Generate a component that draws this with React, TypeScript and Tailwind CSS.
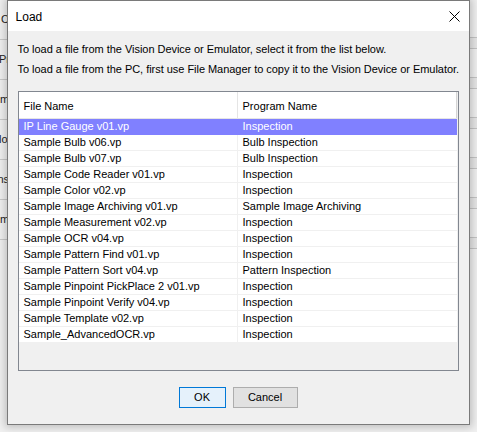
import React from "react";

const rows: [string, string][] = [
  ["IP Line Gauge v01.vp", "Inspection"],
  ["Sample Bulb v06.vp", "Bulb Inspection"],
  ["Sample Bulb v07.vp", "Bulb Inspection"],
  ["Sample Code Reader v01.vp", "Inspection"],
  ["Sample Color v02.vp", "Inspection"],
  ["Sample Image Archiving v01.vp", "Sample Image Archiving"],
  ["Sample Measurement v02.vp", "Inspection"],
  ["Sample OCR v04.vp", "Inspection"],
  ["Sample Pattern Find v01.vp", "Inspection"],
  ["Sample Pattern Sort v04.vp", "Pattern Inspection"],
  ["Sample Pinpoint PickPlace 2 v01.vp", "Inspection"],
  ["Sample Pinpoint Verify v04.vp", "Inspection"],
  ["Sample Template v02.vp", "Inspection"],
  ["Sample_AdvancedOCR.vp", "Inspection"],
];

const font = { fontFamily: '"Liberation Sans", Arial, sans-serif' };

function LeftStrip() {
  const items = [
    { t: "Co", c: "ml-[1px]" },
    { t: "Pro", c: "ml-[-1px]" },
    { t: "Im", c: "ml-[-3px]" },
    { t: "Color", c: "ml-[-15px]" },
    { t: "Sensor", c: "ml-[-16px]" },
    { t: "Im", c: "ml-[-3px]" },
  ];
  return (
    <div className="w-[7px] h-full flex flex-col bg-[#f0f0f0] overflow-hidden">
      {items.map((it, i) => (
        <div
          key={i}
          className="h-[40px] shrink-0 flex items-center border-b border-[#c9c9c9] overflow-hidden whitespace-nowrap text-[11px] text-[#222]"
        >
          <span className={it.c}>{it.t}</span>
        </div>
      ))}
    </div>
  );
}

function RightStrip() {
  return (
    <div className="w-[8px] h-full flex flex-col bg-[#f0f0f0]">
      <div className="h-[37px] shrink-0" />
      {[0, 1, 2, 3, 4, 5].map((i) => (
        <React.Fragment key={i}>
          <div className="h-[12px] shrink-0 border-y border-[#c4c4c4] bg-[#e6e6e6]" />
          <div className="h-[28px] shrink-0" />
        </React.Fragment>
      ))}
    </div>
  );
}

export default function App() {
  return (
    <div
      className="w-[477px] h-[432px] overflow-hidden bg-[#f0f0f0] flex items-start text-black"
      style={font}
    >
      <LeftStrip />
      <div className="relative z-10 w-[463px] h-[425px] shrink-0 border border-[#7a7a7a] bg-[#f0f0f0] flex flex-col shadow-[0_0_8px_2px_rgba(0,0,0,0.22)]">
        <div className="h-[30px] shrink-0 bg-white flex items-center justify-between pl-[8px] pr-[9px]">
          <span className="text-[12px] leading-[14px] mt-[1px]">Load</span>
          <svg width="11" height="11" viewBox="0 0 11 11" className="mt-[1px]">
            <path d="M0.5 0.5 L10.5 10.5 M10.5 0.5 L0.5 10.5" stroke="#000" strokeWidth="1" fill="none" />
          </svg>
        </div>
        <div className="flex-1 flex flex-col px-[10px] pt-[8px]">
          <div className="text-[11px] leading-[20px] whitespace-nowrap tracking-[-0.035px]">
            To load a file from the Vision Device or Emulator, select it from the list below.
          </div>
          <div className="text-[11px] leading-[20px] whitespace-nowrap tracking-[-0.035px]">
            To load a file from the PC, first use File Manager to copy it to the Vision Device or Emulator.
          </div>
          <div className="mt-[12px] w-[441px] h-[280px] border border-[#828790] bg-[#f0f0f0] flex flex-col">
            <div className="h-[27px] shrink-0 bg-white flex border-b border-[#e5e5e5] mr-[1px] text-[11px]">
              <div className="w-[219px] shrink-0 border-r border-[#e5e5e5] pl-[5px] flex items-center pt-[2px]">
                File Name
              </div>
              <div className="flex-1 pl-[5px] flex items-center pt-[2px] border-r border-[#d5d5d5]">
                Program Name
              </div>
            </div>
            <div className="flex flex-col mr-[1px]">
              {rows.map(([a, b], i) => {
                const sel = i === 0;
                return (
                  <div
                    key={i}
                    className={
                      "h-[16px] shrink-0 flex text-[11px] leading-[15px] border-b " +
                      (sel ? "bg-[#8080ff] text-white border-[#8080ff]" : "bg-white border-[#f0f0f0]")
                    }
                  >
                    <div
                      className={
                        "w-[219px] shrink-0 pl-[5px] whitespace-nowrap border-r " +
                        (sel ? "border-[#8080ff]" : "border-[#f0f0f0]")
                      }
                    >
                      {a}
                    </div>
                    <div className="flex-1 pl-[5px] whitespace-nowrap">{b}</div>
                  </div>
                );
              })}
            </div>
          </div>
          <div className="mt-[16px] flex justify-center gap-[7px]">
            <div className="w-[47px] h-[21px] border border-[#0078d7] bg-[#e5f1fb] flex items-center justify-center text-[11px]">
              OK
            </div>
            <div className="w-[65px] h-[21px] border border-[#adadad] bg-[#e1e1e1] flex items-center justify-center text-[11px]">
              Cancel
            </div>
          </div>
        </div>
      </div>
      <RightStrip />
    </div>
  );
}
